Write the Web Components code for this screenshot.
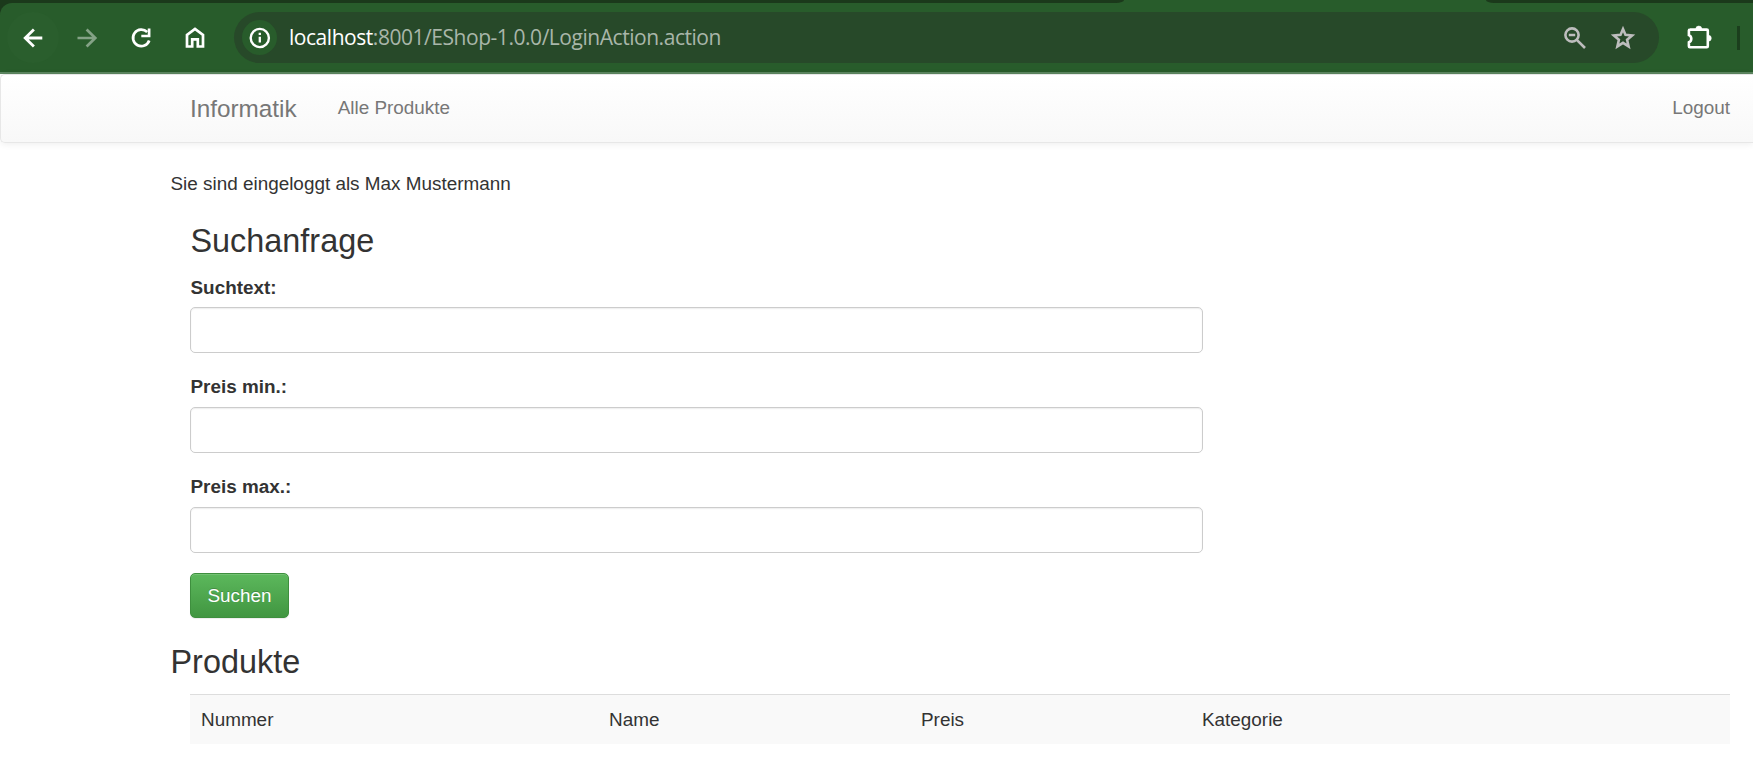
<!DOCTYPE html>
<html lang="de">
<head>
<meta charset="utf-8">
<title>EShop</title>
<style>
html,body{margin:0;height:774px;overflow:hidden;background:#fff}
body{font-family:"Liberation Sans",Arial,sans-serif;font-size:18.9px;line-height:27px;color:#333}
</style>
</head>
<body>
<browser-bar></browser-bar>
<shop-page></shop-page>
<script>
const define = (name, html) => customElements.define(name, class extends HTMLElement {
  constructor() {
    super();
    this.attachShadow({ mode: "open" }).innerHTML = html;
  }
});

const icons = {
  back: '<path d="M27.300 18H11M18.900 9.500L10.200 18l8.700 8.500" stroke-width="2.800"/>',
  forward: '<path d="M8.500 18H25.500M17.600 9.500L26.300 18l-8.700 8.500" stroke-width="2.700"/>',
  reload: '<path d="M24.200 12A8.300 8.300 0 1 0 26.200 20.500" stroke-width="2.700"/><path d="M26.100 8.600V16H18.300" stroke-width="2.700"/>',
  home: '<path d="M10 26.500V14.900L18 9l8 5.900v11.600h-5.200v-7.200h-5.600v7.200z" stroke-width="2.700"/>',
  info: '<circle cx="17.800" cy="18" r="9.100" stroke-width="2.400"/><path d="M17.800 16.700v5.800M17.800 12.700v2.300" stroke-width="2.300"/>',
  zoomout: '<circle cx="15" cy="15" r="6.600" stroke-width="2.600"/><path d="M19.800 19.800l8.200 8.200M11.800 15h6.400" stroke-width="2.600"/>',
  star: '<path d="M18 9l2.500 5.900 6.600.6-5 4.300 1.500 6.600-5.600-3.500-5.600 3.500 1.500-6.600-5-4.300 6.600-.6z" stroke-width="2.600"/>',
  puzzle: '<path d="M8.600 9.600H25.800a1 1 0 0 1 1 1V26.200a1 1 0 0 1-1 1H8.900a1 1 0 0 1-1-1V22.300a3.900 3.900 0 0 0 0-7.200V10.600a1 1 0 0 1 1-1z" stroke-width="2.600"/><path d="M14.800 9a3 3 0 0 1 6 0zM27.300 15.200a3 3 0 0 1 0 6z" fill="currentColor" stroke-width=".5"/>'
};
customElements.define("ui-icon", class extends HTMLElement {
  constructor() {
    super();
    this.attachShadow({ mode: "open" }).innerHTML = `<style>:host{display:block;width:36px;height:36px;flex:none}svg{display:block}</style>
      <svg width="36" height="36" viewBox="0 0 36 36" fill="none" stroke="currentColor">${icons[this.getAttribute("name")]}</svg>`;
  }
});

define("browser-bar", `<style>
  :host{display:block;height:74px;background:#1b391b;color:#fff}
  .tabs{display:flex;justify-content:space-between;height:3px;background:#285c2b}
  .tabs i{display:block;height:3px;background:#1b391b}
  .tabs .l{width:1124px;border-bottom-right-radius:8px 3px}
  .tabs .r{width:267px;border-bottom-left-radius:8px 3px}
  .bar{box-sizing:border-box;height:71px;display:flex;align-items:center;padding-left:7px;background:#285c2b;border-bottom:2px solid #5c8660;border-top-left-radius:12px}
  .hover{display:flex;align-items:center;justify-content:center;width:52px;height:51px;border-radius:26px;background:#2a5e2d}
  .nav{display:flex;gap:18px;margin-left:10px}
  .dim{color:#84a286}
  .pill{display:flex;align-items:center;box-sizing:border-box;flex:none;width:1425px;height:51px;margin-left:21px;padding:0 18px 0 8px;border-radius:26px;background:#274929}
  .info{display:flex;align-items:center;justify-content:center;width:35px;height:35px;border-radius:50%;background:#285c2b}
  .url{flex:1;margin:-2px 0 0 12px;font:21px/30px "Open Sans","Noto Sans",sans-serif;white-space:nowrap;color:#a9b6a9;letter-spacing:-.46px}
  .url b{font-weight:400;color:#fff}
  .tools{display:flex;gap:12px;color:#bdbdbd}
  .ext{margin-left:22px}
  .sep{width:3px;height:24px;background:#1b3e1d;margin-left:20px}
  </style>
  <div class="tabs"><i class="l"></i><i class="r"></i></div>
  <div class="bar">
    <div class="hover"><ui-icon name="back"></ui-icon></div>
    <div class="nav"><ui-icon class="dim" name="forward"></ui-icon><ui-icon name="reload"></ui-icon><ui-icon name="home"></ui-icon></div>
    <div class="pill"><div class="info"><ui-icon name="info"></ui-icon></div>
      <div class="url"><b>localhost</b><span>:8001/EShop-1.0.0/LoginAction.action</span></div>
      <div class="tools"><ui-icon name="zoomout"></ui-icon><ui-icon name="star"></ui-icon></div></div>
    <ui-icon class="ext" name="puzzle"></ui-icon><div class="sep"></div>
  </div>`);

define("shop-nav", `<style>
  :host{display:flex;align-items:flex-start;box-sizing:border-box;height:69px;margin-bottom:27px;padding:0 23px 0 189px;border:1px solid #e7e7e7;border-right:0;border-radius:5px 0 0 5px;background:linear-gradient(#fff,#f8f8f8);box-shadow:inset 0 1px 0 rgba(255,255,255,.15),0 1px 7px rgba(0,0,0,.075);color:#777}
  .brand{font-size:24.3px;padding-top:20px}
  .link{padding-top:19px;margin-left:41px}
  .out{margin-left:auto}
  </style><span class="brand">Informatik</span><span class="link">Alle Produkte</span><span class="link out">Logout</span>`);

define("form-field", `<style>
  :host{display:block;width:1013px;height:100px}
  :host(:first-of-type){height:99px;--gap:6px}
  label{display:block;font-weight:700;padding-left:.5px;margin-bottom:var(--gap,7px)}
  input{display:block;box-sizing:border-box;width:100%;height:46px;border:1px solid #ccc;border-radius:5px;box-shadow:inset 0 1px 1.500px rgba(0,0,0,.075);background:#fff;outline:0}
  </style><label><slot></slot></label><input>`);

define("shop-button", `<style>
  :host{display:block}
  button{display:block;box-sizing:border-box;width:99px;height:45px;padding:0;font:inherit;color:#fff;text-shadow:0 -1px 0 rgba(0,0,0,.2);border:1px solid #3e8f3e;border-radius:5px;background:linear-gradient(#5cb85c,#419641);box-shadow:inset 0 1px 0 rgba(255,255,255,.15),0 1px 1px rgba(0,0,0,.075)}
  </style><button><slot></slot></button>`);

define("shop-table", `<style>
  :host{display:grid;grid-template-columns:408px 312px 281px 1fr;box-sizing:border-box;height:50px;margin:0 23px 0 20px;padding:11px 0 0 11px;border-top:1px solid #ddd;background:#f9f9f9}
  </style><slot></slot>`);

define("shop-page", `<style>
  :host{display:block}
  main{padding-left:170px}
  .status{padding-left:.5px}
  h3{margin:0;padding-left:.5px;font-size:32.4px;font-weight:500;line-height:36px}
  .search{padding:26px 0 0 20px}
  .search h3{margin-bottom:15px}
  shop-button{margin:-1px 0 26px}
  .prod{margin-bottom:14px}
  </style>
  <shop-nav></shop-nav>
  <main><div class="status">Sie sind eingeloggt als Max Mustermann</div>
  <div class="search"><h3>Suchanfrage</h3>
    <form-field>Suchtext:</form-field><form-field>Preis min.:</form-field><form-field>Preis max.:</form-field>
    <shop-button style="margin-top:0">Suchen</shop-button></div>
  <h3 class="prod">Produkte</h3>
  <shop-table><span>Nummer</span><span>Name</span><span>Preis</span><span>Kategorie</span></shop-table></main>`);
</script>
</body>
</html>
